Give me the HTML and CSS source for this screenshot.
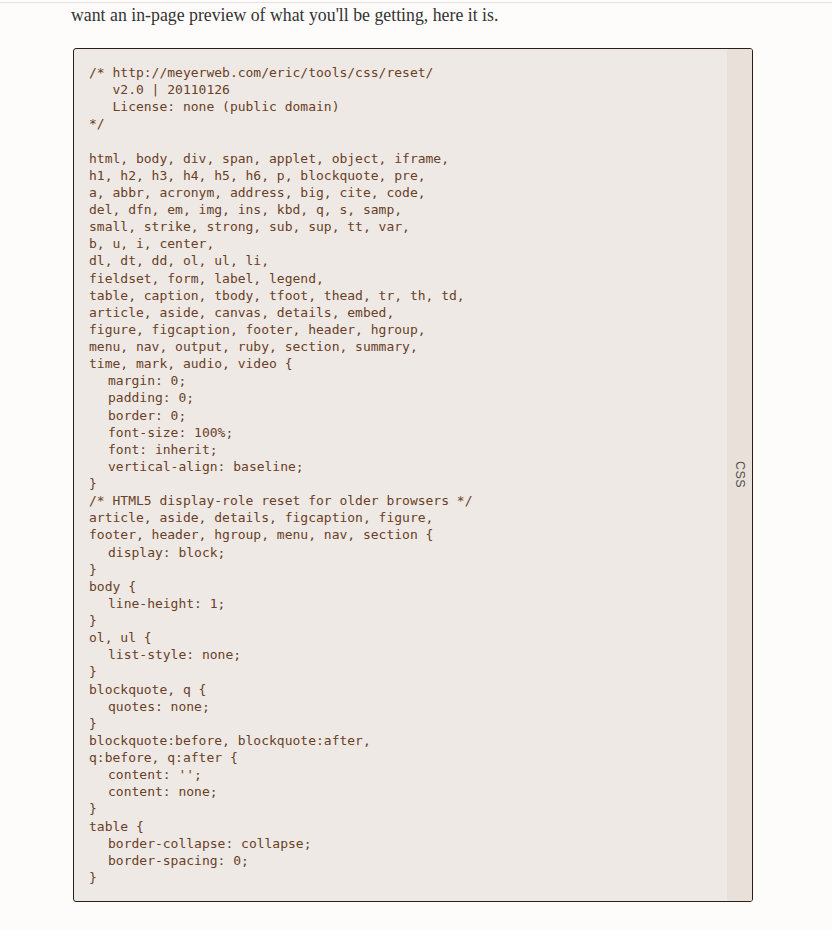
FILE: index.html
```html
<!DOCTYPE html>
<html lang="en">
<head>
<meta charset="utf-8">
<title>CSS reset preview</title>
<link rel="stylesheet" href="styles.css">
</head>
<body>
<div class="topline"></div>
<main class="column">
<p class="intro">want an in-page preview of what you'll be getting, here it is.</p>
<div class="codebox">
<pre class="code">/* http://meyerweb.com/eric/tools/css/reset/
   v2.0 | 20110126
   License: none (public domain)
*/

html, body, div, span, applet, object, iframe,
h1, h2, h3, h4, h5, h6, p, blockquote, pre,
a, abbr, acronym, address, big, cite, code,
del, dfn, em, img, ins, kbd, q, s, samp,
small, strike, strong, sub, sup, tt, var,
b, u, i, center,
dl, dt, dd, ol, ul, li,
fieldset, form, label, legend,
table, caption, tbody, tfoot, thead, tr, th, td,
article, aside, canvas, details, embed,
figure, figcaption, footer, header, hgroup,
menu, nav, output, ruby, section, summary,
time, mark, audio, video {
	margin: 0;
	padding: 0;
	border: 0;
	font-size: 100%;
	font: inherit;
	vertical-align: baseline;
}
/* HTML5 display-role reset for older browsers */
article, aside, details, figcaption, figure,
footer, header, hgroup, menu, nav, section {
	display: block;
}
body {
	line-height: 1;
}
ol, ul {
	list-style: none;
}
blockquote, q {
	quotes: none;
}
blockquote:before, blockquote:after,
q:before, q:after {
	content: '';
	content: none;
}
table {
	border-collapse: collapse;
	border-spacing: 0;
}</pre>
<div class="lang"><span class="lang-label">CSS</span></div>
</div>
</main>
</body>
</html>
```
FILE: styles.css
```css
html, body {
  margin: 0;
  padding: 0;
}
body {
  background: #fdfcfb;
  padding-top: 2px;
}
.topline {
  height: 1px;
  background: #e2e2e2;
}
.column {
  padding-left: 71px;
  width: 682px;
}
.intro {
  margin: 0;
  padding-top: 2px;
  font-family: "Liberation Serif", serif;
  font-size: 17.8px;
  line-height: 20px;
  color: #333;
}
.codebox {
  box-sizing: border-box;
  margin: 23px 0 0 2px;
  width: 680px;
  border: 1px solid #2b1e15;
  border-radius: 3px;
  background: #eee9e5;
  display: flex;
  overflow: hidden;
}
.code {
  flex: 1;
  margin: 0;
  padding: 15px 15px 15px 15px;
  font-family: "DejaVu Sans Mono", monospace;
  font-size: 13px;
  line-height: 17.13px;
  color: #6a4026;
  tab-size: 19px;
  -moz-tab-size: 19px;
}
.lang {
  width: 25px;
  background: #e9e0d9;
  border-radius: 3px 0 0 3px;
  display: flex;
  align-items: center;
  justify-content: center;
}
.lang-label {
  writing-mode: vertical-rl;
  font-family: "Liberation Sans", sans-serif;
  font-size: 12.5px;
  color: #505050;
  letter-spacing: 0.5px;
}
```
